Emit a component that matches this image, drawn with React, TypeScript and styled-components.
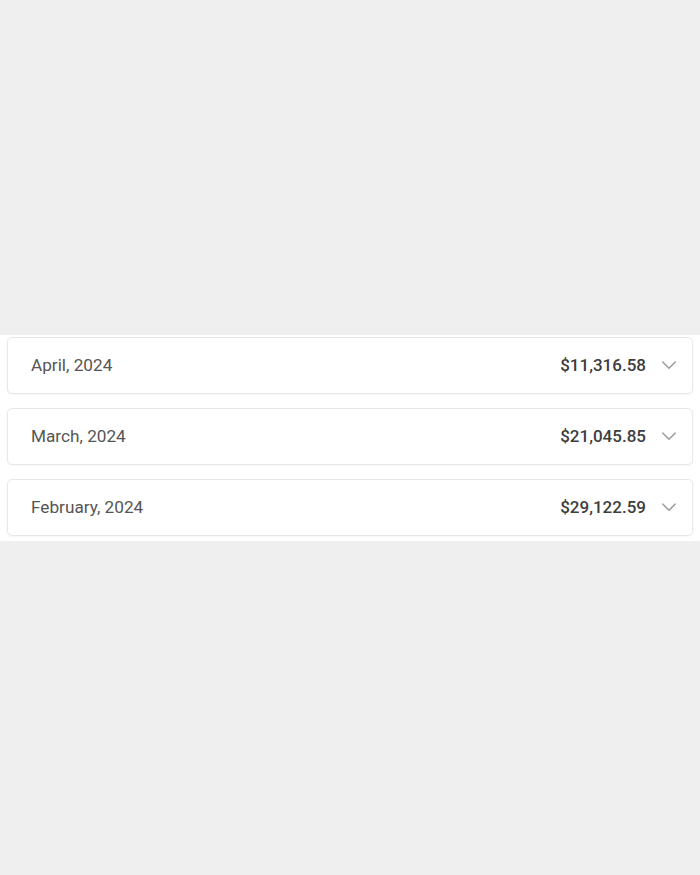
import React from "react";
import styled, { createGlobalStyle } from "styled-components";

const Global = createGlobalStyle`
  html, body { margin: 0; padding: 0; background: #efefef; }
  body { font-family: Roboto, "Noto Sans", Arial, sans-serif; }
`;

const Page = styled.div`
  min-height: 875px;
  display: flex;
  flex-direction: column;
  justify-content: center;
`;

const Band = styled.section`
  background: #ffffff;
  padding: 2px 7px 5px 7px;
  display: flex;
  flex-direction: column;
  gap: 14px;
`;

const Card = styled.div`
  height: 57px;
  box-sizing: border-box;
  border: 1px solid #e8e8e8;
  border-radius: 5px;
  box-shadow: 0 1px 2px rgba(0, 0, 0, 0.04);
  display: flex;
  align-items: center;
  padding: 0 13px 0 23px;
  background: #fff;
`;

const Month = styled.span`
  flex: 1;
  font-size: 17.2px;
  color: #555555;
`;

const Amount = styled.span`
  font-size: 17px;
  font-weight: 500;
  color: #3d3d3d;
  margin-right: 13px;
`;

const Chevron = () => (
  <svg width="20" height="20" viewBox="0 0 24 24" fill="none" stroke="#9a9a9a" strokeWidth="1.7" strokeLinecap="round" strokeLinejoin="round">
    <path d="M4.5 8.5l7.5 7.5 7.5-7.5" />
  </svg>
);

const rows = [
  { month: "April, 2024", amount: "$11,316.58" },
  { month: "March, 2024", amount: "$21,045.85" },
  { month: "February, 2024", amount: "$29,122.59" },
];

export default function App() {
  return (
    <>
      <Global />
      <Page>
        <Band>
          {rows.map((r) => (
            <Card key={r.month}>
              <Month>{r.month}</Month>
              <Amount>{r.amount}</Amount>
              <Chevron />
            </Card>
          ))}
        </Band>
      </Page>
    </>
  );
}
